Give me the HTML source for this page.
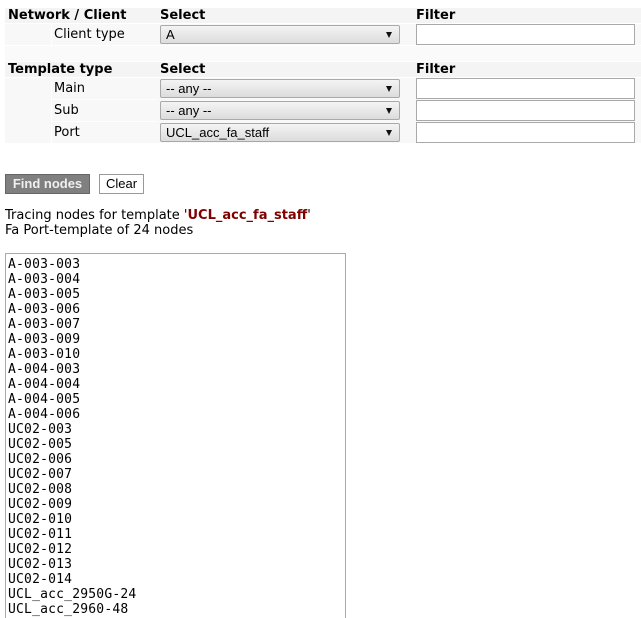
<!DOCTYPE html>
<html style="overflow:hidden;height:618px"><head><meta charset="utf-8"><style>
body{margin:0;background:#fff;font-family:"DejaVu Sans",Verdana,sans-serif;font-size:13px;color:#000;width:641px;height:618px;overflow:hidden;position:relative}
.a{position:absolute}
.h{background:#f4f4f4;font-weight:bold;line-height:16px;height:15px}
.c{background:#f8f8f8}
.sel{position:absolute;box-sizing:border-box;border:1px solid #a9a9a9;border-radius:2px;background:linear-gradient(#f4f4f4,#dcdcdc);height:19px;line-height:17px;padding-left:5px;font-family:"Liberation Sans",Arial,sans-serif;font-size:13px}
.sel:after{content:"";position:absolute;right:7px;top:6px;border-left:3.5px solid transparent;border-right:3.5px solid transparent;border-top:6px solid #111}
.inp{position:absolute;box-sizing:border-box;border:1px solid #a9a9a9;background:#fff;height:21px}
.list{position:absolute;left:5px;top:253px;width:341px;height:380px;box-sizing:border-box;border:1px solid #a9a9a9;padding:3px 0 0 2px;font-family:"DejaVu Sans Mono",monospace;font-size:13px;line-height:15px;letter-spacing:.2px}
</style></head><body>
<div class="a h" style="left:5px;top:8px;width:150px;padding-left:3px">Network / Client</div>
<div class="a h" style="left:157px;top:8px;width:253px;padding-left:3px">Select</div>
<div class="a h" style="left:413px;top:8px;width:225px;padding-left:3px">Filter</div>
<div class="a c" style="left:5px;top:24px;width:46px;height:21px"></div>
<div class="a c" style="left:52px;top:24px;width:104px;height:21px;line-height:22px;padding-left:2px">Client type</div>
<div class="a c" style="left:157px;top:24px;width:256px;height:21px"></div>
<div class="a c" style="left:413px;top:24px;width:228px;height:21px"></div>
<div class="sel" style="left:160px;top:25px;width:240px">A</div>
<div class="inp" style="left:416px;top:24px;width:219px"></div>
<div class="a" style="left:5px;top:46px;width:636px;height:15px;background:#fafafa"></div>

<div class="a h" style="left:5px;top:62px;width:150px;padding-left:3px">Template type</div>
<div class="a h" style="left:157px;top:62px;width:253px;padding-left:3px">Select</div>
<div class="a h" style="left:413px;top:62px;width:225px;padding-left:3px">Filter</div>

<div class="a c" style="left:5px;top:78px;width:46px;height:65px"></div>
<div class="a c" style="left:52px;top:78px;width:104px;height:21px;line-height:22px;padding-left:2px">Main</div>
<div class="a c" style="left:52px;top:100px;width:104px;height:21px;line-height:22px;padding-left:2px">Sub</div>
<div class="a c" style="left:52px;top:122px;width:104px;height:21px;line-height:22px;padding-left:2px">Port</div>
<div class="a c" style="left:157px;top:78px;width:484px;height:65px"></div>
<div class="sel" style="left:160px;top:79px;width:240px">-- any --</div>
<div class="sel" style="left:160px;top:101px;width:240px">-- any --</div>
<div class="sel" style="left:160px;top:123px;width:240px">UCL_acc_fa_staff</div>
<div class="inp" style="left:416px;top:78px;width:219px"></div>
<div class="inp" style="left:416px;top:100px;width:219px"></div>
<div class="inp" style="left:416px;top:122px;width:219px"></div>

<div class="a" style="left:5px;top:174px;width:85px;height:20px;box-sizing:border-box;background:#808080;border:1px solid #666;color:#f0f0f0;font-weight:bold;font-family:'Liberation Sans',Arial,sans-serif;font-size:13px;line-height:18px;text-align:center">Find nodes</div>
<div class="a" style="left:99px;top:174px;width:45px;height:20px;box-sizing:border-box;background:#fff;border:1px solid #999;font-family:'Liberation Sans',Arial,sans-serif;font-size:13px;line-height:18px;text-align:center">Clear</div>

<div class="a" style="left:5px;top:208px;line-height:15px">Tracing nodes for template '<b style="color:#800000">UCL_acc_fa_staff</b>'<br>Fa Port-template of 24 nodes</div>

<div class="list">A-003-003<br>A-003-004<br>A-003-005<br>A-003-006<br>A-003-007<br>A-003-009<br>A-003-010<br>A-004-003<br>A-004-004<br>A-004-005<br>A-004-006<br>UC02-003<br>UC02-005<br>UC02-006<br>UC02-007<br>UC02-008<br>UC02-009<br>UC02-010<br>UC02-011<br>UC02-012<br>UC02-013<br>UC02-014<br>UCL_acc_2950G-24<br>UCL_acc_2960-48</div>
</body></html>
